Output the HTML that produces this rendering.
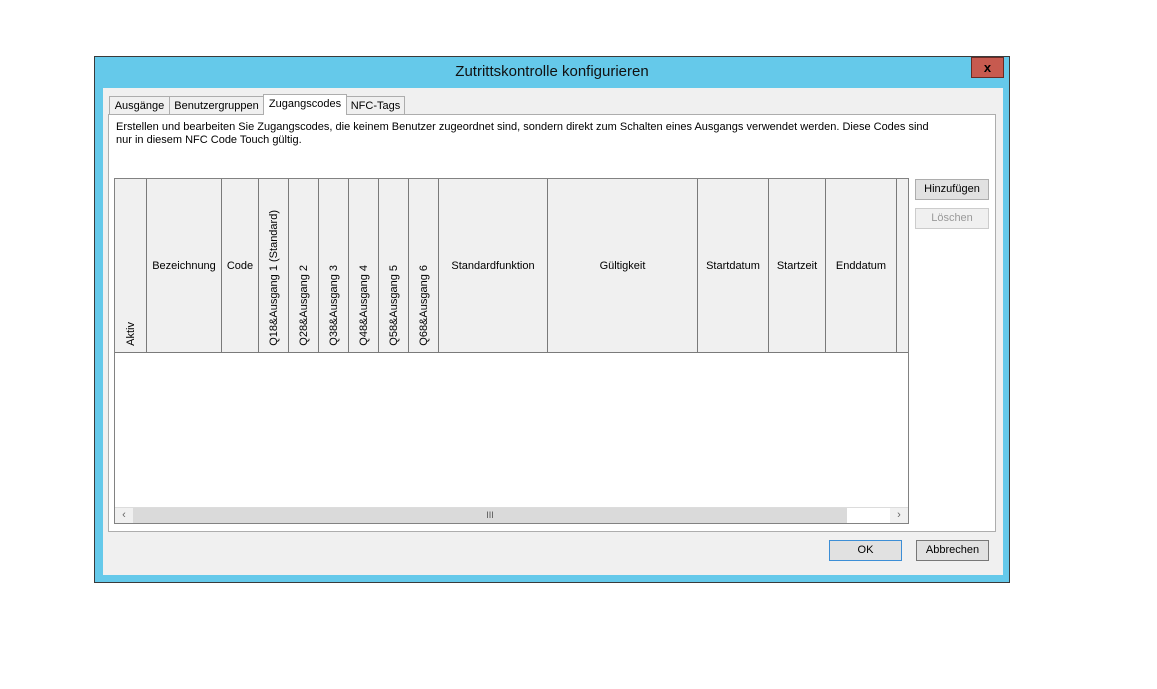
<!DOCTYPE html>
<html><head><meta charset="utf-8"><style>
*{margin:0;padding:0;box-sizing:border-box}
body{width:1157px;height:689px;background:#fff;position:relative;overflow:hidden;font-family:"Liberation Sans",sans-serif;font-size:11px;color:#000}
.a{position:absolute}
.win{left:94px;top:56px;width:916px;height:527px;background:#65c9ea;border:1px solid #3a3a3a}
.title{left:0;top:0;width:914px;height:30px;text-align:center;line-height:30px;font-size:15px;color:#111}
.close{left:876px;top:0;width:33px;height:21px;background:#c75a4f;border:1px solid #6a2a24;color:#000;font-weight:bold;text-align:center;line-height:19px;font-size:13px}
.client{left:8px;top:31px;width:900px;height:487px;background:#f0f0f0}
.tab{top:96px;height:19px;border:1px solid #adadad;border-bottom:none;background:#f0f0f0;line-height:18px;text-align:center;white-space:nowrap}
.panel{left:108px;top:114px;width:888px;height:418px;background:#fff;border:1px solid #adadad}
.th{top:179px;height:174px;background:#f0f0f0;border-right:1px solid #7a7a7a;border-bottom:1px solid #7a7a7a}
.hl{width:100%;text-align:center;position:absolute;top:81px;white-space:nowrap}
.vt{position:absolute;bottom:6px;left:50%;writing-mode:vertical-rl;transform:translateX(-50%) rotate(180deg);white-space:nowrap}
.btn{height:21px;border:1px solid #adadad;background:#e1e1e1;text-align:center;line-height:19px}
</style></head><body>
<div class="a win">
 <div class="a title">Zutrittskontrolle konfigurieren</div>
 <div class="a close">x</div>
 <div class="a client"></div>
</div>
<div class="a tab" style="left:109px;width:61px">Ausgänge</div>
<div class="a tab" style="left:169px;width:95px">Benutzergruppen</div>
<div class="a tab" style="left:346px;width:59px">NFC-Tags</div>
<div class="a panel"></div>
<div class="a tab" style="left:263px;width:84px;top:94px;height:21px;background:#fff;line-height:19px">Zugangscodes</div>
<div class="a" style="left:116px;top:121px;line-height:13px;width:820px;white-space:nowrap">Erstellen und bearbeiten Sie Zugangscodes, die keinem Benutzer zugeordnet sind, sondern direkt zum Schalten eines Ausgangs verwendet werden. Diese Codes sind<br>nur in diesem NFC Code Touch gültig.</div>
<div class="a" style="left:114px;top:178px;width:795px;height:346px;border:1px solid #828282;background:#fff"></div>
<div class="a th" style="left:115px;width:32px"><span class="vt">Aktiv</span></div>
<div class="a th" style="left:147px;width:75px"><div class="hl">Bezeichnung</div></div>
<div class="a th" style="left:222px;width:37px"><div class="hl">Code</div></div>
<div class="a th" style="left:259px;width:30px"><span class="vt">Q18&amp;Ausgang 1 (Standard)</span></div>
<div class="a th" style="left:289px;width:30px"><span class="vt">Q28&amp;Ausgang 2</span></div>
<div class="a th" style="left:319px;width:30px"><span class="vt">Q38&amp;Ausgang 3</span></div>
<div class="a th" style="left:349px;width:30px"><span class="vt">Q48&amp;Ausgang 4</span></div>
<div class="a th" style="left:379px;width:30px"><span class="vt">Q58&amp;Ausgang 5</span></div>
<div class="a th" style="left:409px;width:30px"><span class="vt">Q68&amp;Ausgang 6</span></div>
<div class="a th" style="left:439px;width:109px"><div class="hl">Standardfunktion</div></div>
<div class="a th" style="left:548px;width:150px"><div class="hl">Gültigkeit</div></div>
<div class="a th" style="left:698px;width:71px"><div class="hl">Startdatum</div></div>
<div class="a th" style="left:769px;width:57px"><div class="hl">Startzeit</div></div>
<div class="a th" style="left:826px;width:71px"><div class="hl">Enddatum</div></div>
<div class="a th" style="left:897px;width:11px;border-right:none"></div>
<div class="a" style="left:115px;top:507px;width:793px;height:16px;background:#f0f0f0;border-top:1px solid #dcdcdc"></div>
<div class="a" style="left:115px;top:507px;width:18px;height:16px;text-align:center;color:#666;line-height:16px">&lsaquo;</div>
<div class="a" style="left:133px;top:508px;width:714px;height:15px;background:#dadada;text-align:center;line-height:15px;font-size:9px;color:#555">III</div>
<div class="a" style="left:847px;top:508px;width:43px;height:15px;background:#fff"></div>
<div class="a" style="left:890px;top:507px;width:18px;height:16px;text-align:center;color:#666;line-height:16px">&rsaquo;</div>
<div class="a btn" style="left:915px;top:179px;width:74px">Hinzufügen</div>
<div class="a btn" style="left:915px;top:208px;width:74px;color:#999;background:#f0f0f0;border-color:#ccc">Löschen</div>
<div class="a btn" style="left:829px;top:540px;width:73px;border-color:#3c8ed6">OK</div>
<div class="a btn" style="left:916px;top:540px;width:73px;border-color:#777">Abbrechen</div>
</body></html>
